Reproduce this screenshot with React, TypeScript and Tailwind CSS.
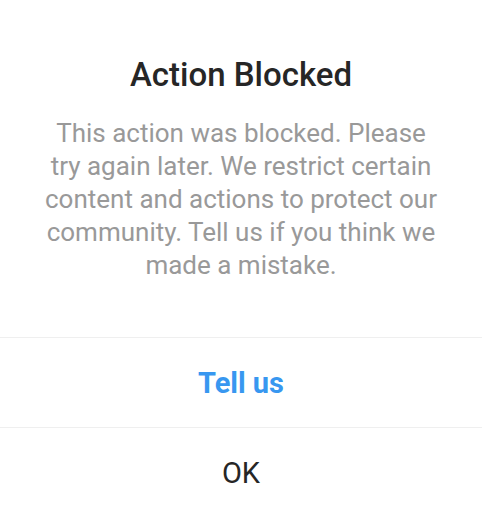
import React from "react";

export default function App() {
  const lines = [
    "This action was blocked. Please",
    "try again later. We restrict certain",
    "content and actions to protect our",
    "community. Tell us if you think we",
    "made a mistake.",
  ];
  return (
    <div className="w-[482px] h-[511px] bg-white overflow-hidden flex flex-col" style={{ fontFamily: "Roboto, 'Noto Sans', sans-serif" }}>
      <div className="pt-[55px] px-2 flex flex-col items-center text-center">
        <h1 className="text-[33px] leading-[40px] font-medium text-[#262626]">Action Blocked</h1>
        <p className="mt-[22px] text-[26px] leading-[33px] text-[#999999]">
          {lines.map((l) => (
            <span key={l} className="block whitespace-nowrap">{l}</span>
          ))}
        </p>
      </div>
      <div className="mt-[55px] shrink-0 border-t border-[#efefef] h-[90px] flex items-center justify-center">
        <span className="text-[29px] leading-[36px] font-bold text-[#3897f0]">Tell us</span>
      </div>
      <div className="shrink-0 border-t border-[#efefef] h-[90px] flex items-center justify-center">
        <span className="text-[29px] leading-[36px] text-[#262626]">OK</span>
      </div>
    </div>
  );
}
